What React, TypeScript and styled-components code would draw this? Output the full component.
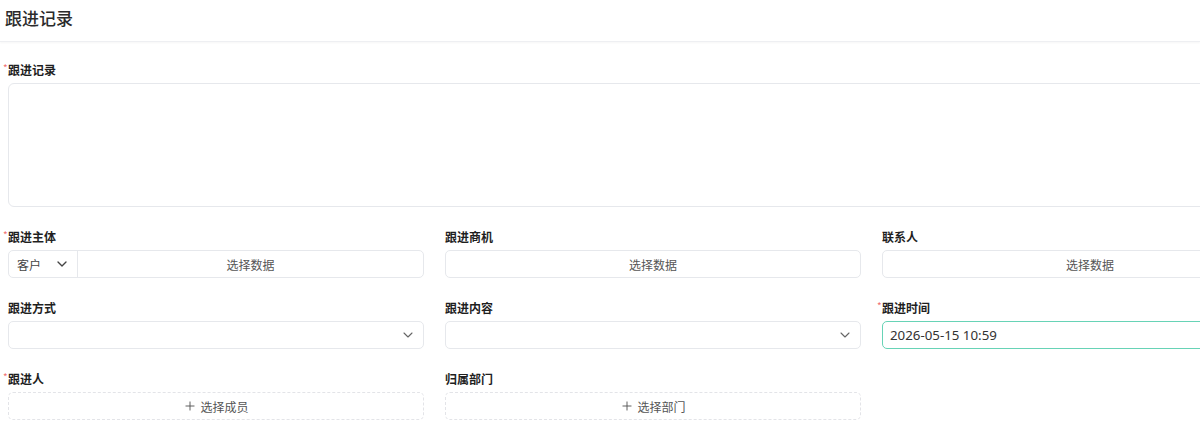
import React from "react";
import styled, { createGlobalStyle } from "styled-components";
import { ChevronDown, Plus } from "lucide-react";

const Global = createGlobalStyle`
  html, body { margin: 0; padding: 0; background: #fff; overflow: hidden; }
  body { font-family: "Noto Sans CJK SC", "Noto Sans", sans-serif; color: #333; }
  * { box-sizing: border-box; }
`;

const Page = styled.div`
  width: 1200px;
  height: 442px;
  overflow: hidden;
`;

const Header = styled.div`
  height: 42px;
  display: flex;
  align-items: center;
  padding-left: 5px;
  border-bottom: 1px solid #eeeff2;
  box-shadow: 0 1px 2px rgba(0, 0, 0, 0.04);
`;

const Title = styled.h1`
  margin: 0;
  font-size: 17px;
  font-weight: 500;
  color: #2b2b2b;
  line-height: 22px;
  margin-top: -6px;
`;

const Form = styled.div`
  padding: 19px 0 0 8px;
  width: 1298px;
  display: grid;
  grid-template-columns: repeat(3, 416px);
  column-gap: 21px;
  row-gap: 21px;
`;

const Field = styled.div<{ $full?: boolean }>`
  display: flex;
  flex-direction: column;
  gap: 4px;
  grid-column: ${(p) => (p.$full ? "1 / -1" : "auto")};
`;

const Label = styled.label<{ $required?: boolean }>`
  position: relative;
  font-size: 12px;
  font-weight: 700;
  line-height: 18px;
  color: #1f1f1f;
  &::before {
    content: ${(p) => (p.$required ? '"*"' : '""')};
    position: absolute;
    left: -5px;
    top: -2px;
    color: #f07070;
    font-size: 10px;
    font-weight: 400;
  }
`;

const TextArea = styled.textarea`
  height: 124px;
  width: 100%;
  border: 1px solid #e6e8ec;
  border-radius: 6px;
  resize: none;
  outline: none;
  font: inherit;
`;

const Box = styled.div<{ $focus?: boolean; $dashed?: boolean }>`
  height: 28px;
  display: flex;
  align-items: center;
  border: 1px ${(p) => (p.$dashed ? "dashed" : "solid")}
    ${(p) => (p.$focus ? "#67d3b6" : p.$dashed ? "#e3e4e8" : "#e6e8ec")};
  border-radius: 5px;
  font-size: 12px;
  color: #555;
  overflow: hidden;
`;

const Prefix = styled.div`
  width: 69px;
  height: 100%;
  display: flex;
  align-items: center;
  justify-content: space-between;
  padding: 0 7px 0 8px;
  border-right: 1px solid #e6e8ec;
  color: #444;
`;

const Center = styled.div`
  flex: 1;
  display: flex;
  align-items: center;
  justify-content: center;
  gap: 3px;
  color: #555;
`;

const SelectBody = styled.div`
  flex: 1;
  display: flex;
  align-items: center;
  justify-content: flex-end;
  padding-right: 7px;
  color: #666;
`;

const Value = styled.div`
  padding-left: 7px;
  color: #333;
  font-family: "Noto Sans", "Noto Sans CJK SC", sans-serif;
  font-size: 13.3px;
`;

export default function App() {
  return (
    <Page>
      <Global />
      <Header>
        <Title>跟进记录</Title>
      </Header>
      <Form>
        <Field $full>
          <Label $required>跟进记录</Label>
          <TextArea />
        </Field>

        <Field>
          <Label $required>跟进主体</Label>
          <Box>
            <Prefix>
              客户
              <ChevronDown size={16} strokeWidth={2} color="#444" />
            </Prefix>
            <Center>选择数据</Center>
          </Box>
        </Field>
        <Field>
          <Label>跟进商机</Label>
          <Box>
            <Center>选择数据</Center>
          </Box>
        </Field>
        <Field>
          <Label>联系人</Label>
          <Box>
            <Center>选择数据</Center>
          </Box>
        </Field>

        <Field>
          <Label>跟进方式</Label>
          <Box>
            <SelectBody>
              <ChevronDown size={16} strokeWidth={1.6} />
            </SelectBody>
          </Box>
        </Field>
        <Field>
          <Label>跟进内容</Label>
          <Box>
            <SelectBody>
              <ChevronDown size={16} strokeWidth={1.6} />
            </SelectBody>
          </Box>
        </Field>
        <Field>
          <Label $required>跟进时间</Label>
          <Box $focus>
            <Value>2026-05-15 10:59</Value>
          </Box>
        </Field>

        <Field>
          <Label $required>跟进人</Label>
          <Box $dashed>
            <Center>
              <Plus size={14} strokeWidth={1.6} />
              选择成员
            </Center>
          </Box>
        </Field>
        <Field>
          <Label>归属部门</Label>
          <Box $dashed>
            <Center>
              <Plus size={14} strokeWidth={1.6} />
              选择部门
            </Center>
          </Box>
        </Field>
      </Form>
    </Page>
  );
}
